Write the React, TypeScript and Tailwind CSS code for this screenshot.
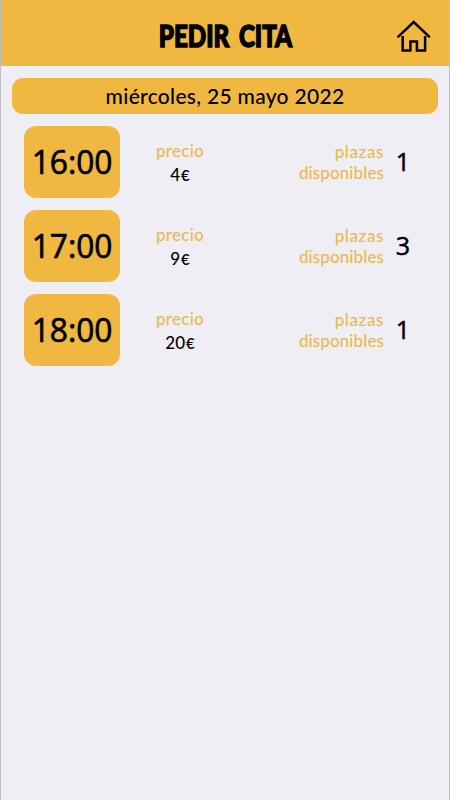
const slots = [
  { time: '16:00', price: '4', places: '1' },
  { time: '17:00', price: '9', places: '3' },
  { time: '18:00', price: '20', places: '1' },
];

function HomeIcon() {
  return (
    <svg width="36" height="34" viewBox="0 0 36 34" fill="none" stroke="#000" strokeWidth="2.5" strokeLinejoin="miter">
      <path d="M2.3 17.6 17.7 3 33.1 17.6" strokeLinecap="round" />
      <path d="M6.7 17V31.6H14.4V22.4H20.9V31.6H29.1V17" />
    </svg>
  );
}

export default function App() {
  return (
    <div className="flex h-[800px] w-[450px] flex-col overflow-hidden border-x border-[#c0bfc5] bg-[#efeef4] font-['Lato',sans-serif] text-black">
      <header className="grid h-[66px] shrink-0 grid-cols-[60px_1fr_60px] items-center bg-[#f0b840]">
        <span />
        <h1 className="flex justify-center pt-[3px]">
          <span className="origin-center scale-x-[0.78] whitespace-nowrap text-[31px] leading-9 font-black [word-spacing:5px] [-webkit-text-stroke:1.5px_#000]">PEDIR CITA</span>
        </h1>
        <button className="flex pt-1.5 pl-[7px]" aria-label="Inicio">
          <HomeIcon />
        </button>
      </header>
      <main className="flex flex-col px-[11px] pt-3">
        <div className="flex h-9 items-center justify-center rounded-[11px] bg-[#f0b840] text-[21px] leading-9 font-medium tracking-[0.3px]">
          <span className="whitespace-nowrap">miércoles, 25 mayo 2022</span>
        </div>
        <ul className="flex flex-col gap-3 px-3 pt-3">
          {slots.map((s) => (
            <li key={s.time} className="flex h-[72px] items-center">
              <div className="flex h-[72px] w-24 shrink-0 items-center justify-center rounded-xl bg-[#f0b840] font-['Open_Sans',sans-serif] text-[33px] font-medium">
                <span className="origin-center scale-x-[0.96] [-webkit-text-stroke:0.7px_#000]">{s.time}</span>
              </div>
              <div className="flex w-[120px] flex-col items-center pt-0.5 text-[17px] leading-6 font-medium">
                <span className="tracking-[0.3px] text-[#ebb94f]">precio</span>
                <span className="flex items-baseline gap-px font-medium">
                  {s.price}
                  <span className="text-[15px] font-semibold">€</span>
                </span>
              </div>
              <div className="flex w-[144px] flex-col items-end text-[17px] leading-[21px] font-medium text-[#ebb94f]">
                <span className="tracking-[0.6px]">plazas</span>
                <span className="tracking-[0.1px]">disponibles</span>
              </div>
              <span className="flex w-[38px] justify-center font-['Open_Sans',sans-serif] text-[25px] font-medium [-webkit-text-stroke:0.5px_#000]">{s.places}</span>
            </li>
          ))}
        </ul>
      </main>
    </div>
  );
}
